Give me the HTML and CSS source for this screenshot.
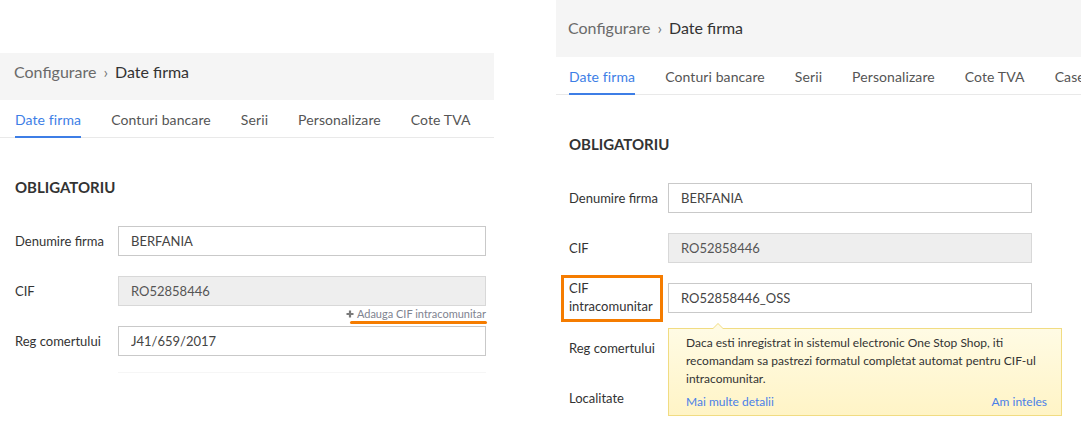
FILE: index.html
```html
<!DOCTYPE html>
<html>

<head>
    <title>Date firma</title>
    <link rel="stylesheet" href="styles.css">
</head>

<body>
    <div class="screen">
        <section class="panel panel-a">
            <div class="crumbs">
                <span class="crumb-root">Configurare</span>
                <span class="crumb-sep">&rsaquo;</span>
                <span class="crumb-current">Date firma</span>
            </div>
            <nav class="tabs">
                <a class="tab active">Date firma</a>
                <a class="tab">Conturi bancare</a>
                <a class="tab">Serii</a>
                <a class="tab">Personalizare</a>
                <a class="tab">Cote TVA</a>
            </nav>
            <div class="content">
                <h2 class="section-title">OBLIGATORIU</h2>
                <div class="form">
                    <div class="row">
                        <label class="label">Denumire firma</label>
                        <div class="field"><input class="input" type="text" value="BERFANIA" /></div>
                    </div>
                    <div class="row">
                        <label class="label">CIF</label>
                        <div class="field">
                            <input class="input input-locked" type="text" value="RO52858446" readonly />
                            <a class="hint">
                                <svg width="8" height="8" viewBox="0 0 8 8"><path d="M4 0.5v7M0.5 4h7" stroke="#7a7a7a" stroke-width="2.2" /></svg>
                                Adauga CIF intracomunitar
                            </a>
                        </div>
                    </div>
                    <div class="row">
                        <label class="label">Reg comertului</label>
                        <div class="field"><input class="input" type="text" value="J41/659/2017" /></div>
                    </div>
                </div>
                <div class="fade"></div>
            </div>
        </section>

        <section class="panel panel-b">
            <div class="crumbs">
                <span class="crumb-root">Configurare</span>
                <span class="crumb-sep">&rsaquo;</span>
                <span class="crumb-current">Date firma</span>
            </div>
            <nav class="tabs">
                <a class="tab active">Date firma</a>
                <a class="tab">Conturi bancare</a>
                <a class="tab">Serii</a>
                <a class="tab">Personalizare</a>
                <a class="tab">Cote TVA</a>
                <a class="tab">Case de marcat</a>
            </nav>
            <div class="content">
                <h2 class="section-title">OBLIGATORIU</h2>
                <div class="form">
                    <div class="row">
                        <label class="label">Denumire firma</label>
                        <div class="field"><input class="input" type="text" value="BERFANIA" /></div>
                    </div>
                    <div class="row">
                        <label class="label">CIF</label>
                        <div class="field"><input class="input input-locked" type="text" value="RO52858446" readonly /></div>
                    </div>
                    <div class="row">
                        <label class="label label-marked">CIF intracomunitar</label>
                        <div class="field">
                            <input class="input" type="text" value="RO52858446_OSS" />
                            <div class="popover">
                                <p>Daca esti inregistrat in sistemul electronic One Stop Shop, iti recomandam sa pastrezi formatul completat automat pentru CIF-ul intracomunitar.</p>
                                <div class="popover-actions">
                                    <a>Mai multe detalii</a>
                                    <a>Am inteles</a>
                                </div>
                            </div>
                        </div>
                    </div>
                    <div class="row">
                        <label class="label">Reg comertului</label>
                        <div class="field"><input class="input" type="text" value="J41/659/2017" /></div>
                    </div>
                    <div class="row">
                        <label class="label">Localitate</label>
                        <div class="field"><input class="input" type="text" value="" /></div>
                    </div>
                </div>
            </div>
        </section>
    </div>
</body>

</html>
```

FILE: styles.css
```css
body {
    margin: 0;
    padding: 0;
    font-family: Lato, "Liberation Sans", sans-serif;
    color: #333;
    background-color: #fff;
}

.screen {
    display: flex;
    align-items: flex-start;
    gap: 62px;
    width: 1081px;
    height: 426px;
    overflow: hidden;
}

.panel-a {
    width: 494px;
    flex-shrink: 0;
    margin-top: 53px;
}

.panel-b {
    flex: 1;
    min-width: 0;
    height: 426px;
    overflow: hidden;
}

/* breadcrumb band */
.crumbs {
    display: flex;
    align-items: center;
    background-color: #f5f5f5;
    font-size: 16px;
    line-height: 20px;
    white-space: nowrap;
}

.panel-a .crumbs {
    padding: 9px 0 18px 14px;
}

.panel-b .crumbs {
    padding: 18px 0 19px 12px;
}

.crumb-root {
    color: #6a6a6a;
}

.crumb-sep {
    color: #777;
    margin: 0 7px;
}

.crumb-current {
    color: #333;
}

/* tabs */
.tabs {
    display: flex;
    gap: 30px;
    border-bottom: 1px solid #e9e9e9;
    white-space: nowrap;
    font-size: 14px;
    letter-spacing: 0.1px;
}

.panel-a .tabs {
    padding-left: 15px;
}

.panel-b .tabs {
    padding-left: 13px;
}

.tab {
    flex-shrink: 0;
    padding: 11px 0 7px;
    line-height: 18px;
    color: #555;
    cursor: pointer;
}

.tab.active {
    color: #3d7ee6;
    border-bottom: 2px solid #3d7ee6;
    margin-bottom: -1px;
}

/* form */
.panel-a .content {
    padding-left: 15px;
}

.panel-b .content {
    padding-left: 13px;
}

.section-title {
    margin: 39px 0 29px;
    font-size: 15px;
    line-height: 20px;
    font-weight: 700;
    color: #333;
}

.form {
    display: flex;
    flex-direction: column;
    gap: 20px;
}

.panel-a .form {
    width: 471px;
}

.panel-b .form {
    width: 463px;
}

.row {
    display: flex;
    align-items: center;
    height: 30px;
}

.label {
    flex-shrink: 0;
    font-size: 13px;
    line-height: 18px;
    color: #333;
}

.panel-a .label {
    width: 103px;
}

.panel-b .label {
    width: 99px;
}

.panel-b .label-marked {
    width: 96px;
    box-sizing: border-box;
    margin: 0 8px 0 -5px;
    padding: 1px 0 4px 5px;
    outline: 3px solid #f57c00;
}

.field {
    position: relative;
    flex: 1;
    height: 30px;
}

.input {
    width: 100%;
    height: 30px;
    box-sizing: border-box;
    margin: 0;
    padding: 0 12px;
    border: 1px solid #c9c9c9;
    border-radius: 0;
    background-color: #fff;
    font-family: Lato, "Liberation Sans", sans-serif;
    font-size: 13px;
    color: #444;
    outline: none;
}

.input-locked {
    background-color: #eee;
    border-color: #d8d8d8;
    color: #555;
}

.hint {
    position: absolute;
    top: 100%;
    right: 0;
    margin-top: 1px;
    display: flex;
    align-items: center;
    gap: 3px;
    font-size: 11px;
    line-height: 14px;
    color: #80838f;
    white-space: nowrap;
    cursor: pointer;
}

.hint::after {
    content: "";
    position: absolute;
    left: 4px;
    right: -1px;
    bottom: -3px;
    height: 3px;
    border-radius: 2px;
    background-color: #f57c00;
}

.fade {
    height: 1px;
    margin: 16px 8px 0 103px;
    background-color: #f6f6f6;
}

/* yellow info popover */
.popover {
    position: absolute;
    top: calc(100% + 15px);
    left: 0;
    z-index: 2;
    width: 394px;
    box-sizing: border-box;
    padding: 5px 14px 4px 17px;
    border: 1px solid #f1dc82;
    background: linear-gradient(#fffbe4, #fff4c6);
    font-size: 12px;
    line-height: 18px;
    color: #333;
}

.popover::before,
.popover::after {
    content: "";
    position: absolute;
    left: 43px;
    border: 6px solid transparent;
    border-top: 0;
}

.popover::before {
    top: -6px;
    border-bottom-color: #f1dc82;
}

.popover::after {
    top: -5px;
    border-bottom-color: #fffbe4;
}

.popover p {
    margin: 0;
}

.popover-actions {
    display: flex;
    justify-content: space-between;
    margin-top: 5px;
}

.popover-actions a {
    color: #4a80e8;
    cursor: pointer;
}
```
